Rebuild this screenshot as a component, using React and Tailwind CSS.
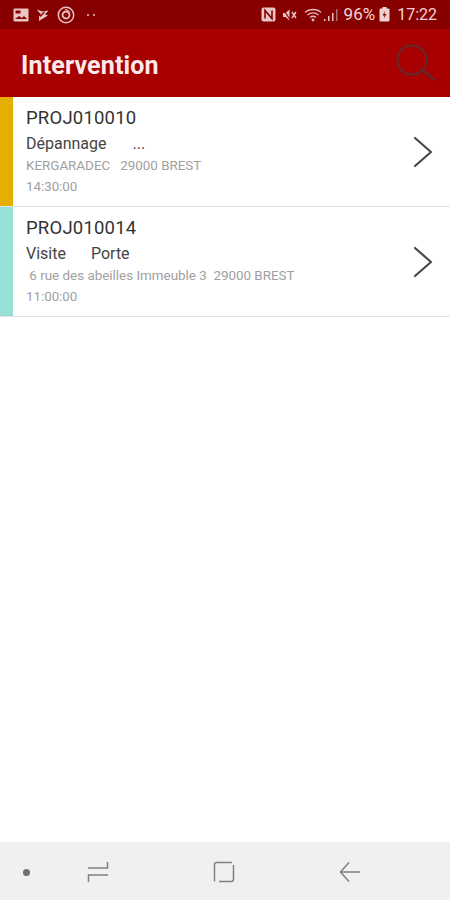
const rows = [
  { id: 'PROJ010010', type: 'Dépannage', sub: '...', subGap: 'ml-[26px]', address: 'KERGARADEC   29000 BREST', time: '14:30:00', color: 'bg-[#e5ae00]' },
  { id: 'PROJ010014', type: 'Visite', sub: 'Porte', subGap: 'ml-[25px]', address: ' 6 rue des abeilles Immeuble 3  29000 BREST', time: '11:00:00', color: 'bg-[#96e0d8]' },
];

function StatusLeft() {
  return (
    <div className="flex items-center">
      <svg width="16" height="14" viewBox="0 0 16 14" className="ml-[13px]">
        <rect x="0.5" y="0.5" width="15" height="13" rx="1" fill="#e8c4c4" />
        <rect x="2.5" y="2.5" width="5" height="3" fill="#8a0000" />
        <path d="M2 11l4-3 3 2 2-2 3 3z" fill="#8a0000" />
      </svg>
      <svg width="14" height="14" viewBox="0 0 14 14" className="ml-[7px]">
        <path d="M1 1.5l5.5 2 6-1-3.5 4 3 1-9 5.5V8l2-2-2-1.500z" fill="#e8c4c4" />
        <path d="M2.500 6l2 2 4-4" stroke="#8a0000" strokeWidth="1.300" fill="none" />
      </svg>
      <svg width="18" height="18" viewBox="0 0 18 18" className="ml-[7px]" fill="none" stroke="#e8c4c4">
        <circle cx="9" cy="9" r="7.700" strokeWidth="1.500" />
        <circle cx="9" cy="9" r="3.500" strokeWidth="1.800" />
        <path d="M8 3.500a5.500 5.500 0 0 1 5 3" strokeWidth="1" />
      </svg>
      <span className="ml-[12px] w-[2px] h-[2px] rounded-full bg-[#e8c4c4]" />
      <span className="ml-[4px] w-[2px] h-[2px] rounded-full bg-[#e8c4c4]" />
    </div>
  );
}

function StatusRight() {
  return (
    <div className="flex items-center text-[#f0d4d4] pr-[13px]">
      <svg width="15" height="15" viewBox="0 0 15 15">
        <rect x="0.500" y="0.500" width="14" height="14" rx="2" fill="#e8c4c4" />
        <path d="M4 11.500V3.500l7 8V3.500" stroke="#8a0000" strokeWidth="1.600" fill="none" />
      </svg>
      <svg width="16" height="14" viewBox="0 0 16 14" className="ml-[6px]">
        <path d="M1 5h2.500L7.500 1.500v11L3.500 9H1z" fill="#e8c4c4" />
        <path d="M1 1l8 12" stroke="#8a0000" strokeWidth="1.200" />
        <path d="M10 4l4 6M14 4l-4 6" stroke="#e8c4c4" strokeWidth="1.400" />
      </svg>
      <svg width="20" height="14" viewBox="0 0 20 14" className="ml-[6px]" fill="none" stroke="#e3b8b8" strokeWidth="1.300">
        <path d="M1 4.500C5 .500 13 .500 17 4.500" />
        <path d="M3.500 7c3-2.800 8-2.800 11 0" />
        <path d="M6 9.500c1.800-1.500 4.200-1.500 6 0" />
        <circle cx="9" cy="12" r="0.800" fill="#e3b8b8" />
      </svg>
      <svg width="16" height="14" viewBox="0 0 16 14" className="ml-[-1px]">
        <rect x="1" y="11" width="1.500" height="2" fill="#e3b8b8" />
        <rect x="5" y="8" width="1.500" height="5" fill="#e8c4c4" />
        <rect x="9" y="5" width="1.500" height="8" fill="#e8c4c4" />
        <rect x="13" y="1" width="1.500" height="12" fill="#b56a6a" />
      </svg>
      <span className="ml-[5px] text-[17px] leading-none">96%</span>
      <svg width="11" height="15" viewBox="0 0 11 15" className="ml-[4px]">
        <rect x="3.500" y="0" width="4" height="2" fill="#f0d4d4" />
        <rect x="0.500" y="1.500" width="10" height="13" rx="1" fill="#f0d4d4" />
        <path d="M6 4L3.500 8.500h2L5 11.500 7.500 7h-2z" fill="#8a0000" />
      </svg>
      <span className="ml-[7px] text-[16px] leading-none">17:22</span>
    </div>
  );
}

function Row({ row }) {
  return (
    <div className="flex h-[110px] border-b border-[#e4e4e4] bg-white">
      <div className={`w-[13px] shrink-0 ${row.color}`} />
      <div className="flex-1 min-w-0 pl-[13px] pt-[10px]">
        <div className="text-[18.500px] leading-[22px] tracking-[0.2px] text-[#333333]">{row.id}</div>
        <div className="mt-[5px] flex text-[16px] leading-[20px] text-[#444444]">
          <span>{row.type}</span>
          <span className={row.subGap}>{row.sub}</span>
        </div>
        <div className="mt-[4px] text-[13.400px] leading-[16px] text-[#a0a0a0] whitespace-pre">{row.address}</div>
        <div className="mt-[5px] text-[13.300px] leading-[16px] text-[#a0a0a0]">{row.time}</div>
      </div>
      <div className="flex items-center pr-[17px]">
        <svg width="20" height="32" viewBox="0 0 20 32" fill="none" stroke="#484848" strokeWidth="2.200" strokeLinecap="round" strokeLinejoin="round">
          <path d="M2 2l16 14L2 30" />
        </svg>
      </div>
    </div>
  );
}

export default function App() {
  return (
    <div className="flex flex-col h-[900px] bg-white font-['Roboto',sans-serif]">
      <div className="h-[29px] flex items-center justify-between bg-[#860000] shrink-0">
        <StatusLeft />
        <StatusRight />
      </div>
      <header className="h-[68px] flex items-center justify-between bg-[#a80000] pl-[21px] pr-[13px] shrink-0">
        <h1 className="pt-[6px] text-[25px] font-bold tracking-[0.15px] text-[#fbeaea]">Intervention</h1>
        <svg width="42" height="42" viewBox="0 0 42 42" className="mt-[2px]" fill="none" stroke="#5e2a2a" strokeWidth="2">
          <circle cx="17" cy="17" r="14.500" />
          <path d="M28 27l11 10" strokeWidth="2.500" />
        </svg>
      </header>

      <main className="flex-1">
        {rows.map((row) => (
          <Row key={row.id} row={row} />
        ))}
      </main>

      <nav className="h-[58px] flex items-center bg-[#f0f0f0] pt-[2px] shrink-0">
        <span className="ml-[23px] w-[7px] h-[7px] rounded-full bg-[#707070]" />
        <svg width="22" height="22" viewBox="0 0 22 22" className="ml-[57px]" fill="none" stroke="#808080" strokeWidth="1.500">
          <path d="M1 7h19.500V1" />
          <path d="M21 14H1.500v7" />
        </svg>
        <svg width="22" height="22" viewBox="0 0 22 22" className="ml-[104px]" fill="none" stroke="#808080" strokeWidth="1.500">
          <path d="M1.500 20.500V3.500a2 2 0 0 1 2-2H19" />
          <path d="M20.500 4v14a2.500 2.500 0 0 1-2.500 2.500H6" />
        </svg>
        <svg width="22" height="22" viewBox="0 0 22 22" className="ml-[104px]" fill="none" stroke="#808080" strokeWidth="1.500">
          <path d="M21 11H1.500" />
          <path d="M10 1.500L1.500 11l8.500 9.500" />
        </svg>
      </nav>
    </div>
  );
}
